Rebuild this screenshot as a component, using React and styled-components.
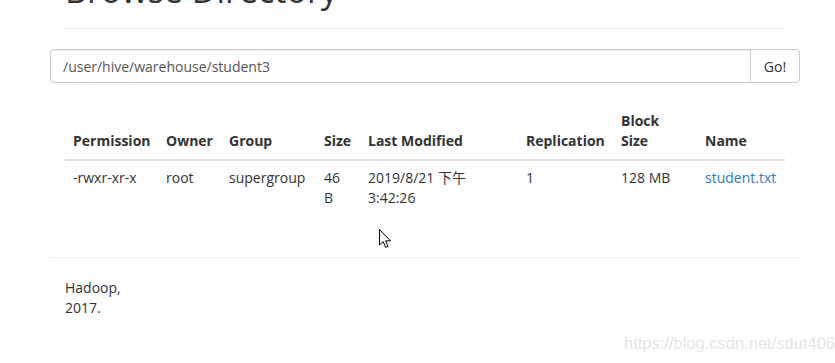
import React from "react";
import styled, { createGlobalStyle } from "styled-components";

const Global = createGlobalStyle`
  html, body { margin: 0; padding: 0; background: #fff; }
  body {
    font-family: "Open Sans", "Noto Sans CJK SC", sans-serif;
    font-size: 14px;
    line-height: 20px;
    color: #333;
  }
  * { box-sizing: border-box; }
`;

const Page = styled.div`
  position: relative;
  width: 835px;
  height: 363px;
  overflow: hidden;
`;

const Container = styled.div`
  width: 750px;
  margin-left: 50px;
  padding-top: 1px;
  margin-top: -1px;
`;

const PageHeader = styled.div`
  margin: -29px 15px 20px;
  padding-bottom: 18px;
  border-bottom: 1px solid #eee;
`;

const Title = styled.h1`
  margin: 0;
  font-size: 34px;
  line-height: 39px;
  font-weight: 500;
  color: #333;
`;

const InputGroup = styled.form`
  display: flex;
  height: 34px;
`;

const PathInput = styled.input`
  flex: 1;
  height: 34px;
  padding: 6px 12px;
  font-family: inherit;
  font-size: 14px;
  color: #555;
  border: 1px solid #ccc;
  border-radius: 4px 0 0 4px;
  outline: none;
  box-shadow: inset 0 1px 1px rgba(0, 0, 0, 0.075);
`;

const GoButton = styled.button`
  width: 50px;
  height: 34px;
  margin-left: -1px;
  padding: 6px 12px;
  font-family: inherit;
  font-size: 14px;
  color: #333;
  background: #fff;
  border: 1px solid #ccc;
  border-radius: 0 4px 4px 0;
`;

const TableWrap = styled.div`
  margin: 20px 15px 41px;
`;

const Table = styled.table`
  width: 720px;
  table-layout: fixed;
  border-collapse: collapse;
  border-spacing: 0;
`;

const Th = styled.th`
  width: ${(p) => p.$w}px;
  padding: 8px;
  text-align: left;
  vertical-align: bottom;
  font-weight: 700;
  line-height: 20px;
  border-bottom: 2px solid #ddd;
`;

const Td = styled.td`
  padding: 7px 8px 8px;
  vertical-align: top;
  line-height: 20px;
  color: #333;
`;

const FileLink = styled.a`
  color: #337ab7;
  text-decoration: none;
`;

const Footer = styled.div`
  border-top: 1px solid #eee;
  padding: 20px 15px;
`;

const FooterText = styled.p`
  margin: 0;
  width: 70px;
`;

const Watermark = styled.div`
  position: absolute;
  left: 624px;
  top: 333px;
  font-family: "Liberation Sans", Arial, sans-serif;
  font-size: 16.5px;
  line-height: 20px;
  color: #e6e6e6;
  white-space: nowrap;
`;

const Cursor = styled.svg`
  position: absolute;
  left: 379px;
  top: 229px;
`;

const columns = [
  ["Permission", 93],
  ["Owner", 63],
  ["Group", 95],
  ["Size", 44],
  ["Last Modified", 158],
  ["Replication", 95],
  ["Block Size", 84],
  ["Name", 88],
];

export default function App() {
  return (
    <Page>
      <Global />
      <Container>
        <PageHeader>
          <Title>Browse Directory</Title>
        </PageHeader>
        <InputGroup onSubmit={(e) => e.preventDefault()}>
          <PathInput defaultValue="/user/hive/warehouse/student3" />
          <GoButton type="button">Go!</GoButton>
        </InputGroup>
        <TableWrap>
          <Table>
            <thead>
              <tr>
                {columns.map(([label, w]) => (
                  <Th key={label} $w={w}>
                    {label}
                  </Th>
                ))}
              </tr>
            </thead>
            <tbody>
              <tr>
                <Td>-rwxr-xr-x</Td>
                <Td>root</Td>
                <Td>supergroup</Td>
                <Td>46 B</Td>
                <Td>2019/8/21 下午 3:42:26</Td>
                <Td>1</Td>
                <Td>128 MB</Td>
                <Td>
                  <FileLink href="#">student.txt</FileLink>
                </Td>
              </tr>
            </tbody>
          </Table>
        </TableWrap>
        <Footer>
          <FooterText>Hadoop, 2017.</FooterText>
        </Footer>
      </Container>
      <Cursor width="13" height="20" viewBox="0 0 13 20">
        <path
          d="M0.5 0.5 L0.5 16 L4.2 12.6 L6.6 18.4 L9 17.4 L6.6 11.8 L11.5 11.8 Z"
          fill="#fff"
          stroke="#000"
          strokeWidth="1"
          strokeLinejoin="miter"
        />
      </Cursor>
      <Watermark>https://blog.csdn.net/sdut406</Watermark>
    </Page>
  );
}
